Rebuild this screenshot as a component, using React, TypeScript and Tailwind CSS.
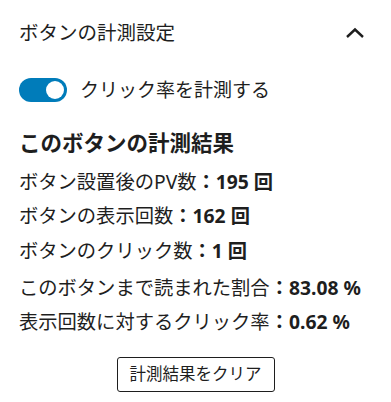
import React, { useState } from 'react';

const font = { fontFamily: '"Noto Sans", "Noto Sans CJK JP", sans-serif' };

function Toggle({ checked, onChange }: { checked: boolean; onChange: () => void }) {
  return (
    <button
      type="button"
      role="switch"
      aria-checked={checked}
      onClick={onChange}
      className={
        'relative h-[24px] w-[48px] shrink-0 rounded-full transition ' +
        (checked ? 'bg-[#007cba]' : 'bg-white border-2 border-[#1e1e1e]')
      }
    >
      <span
        className={
          'absolute top-[3px] h-[18px] w-[18px] rounded-full transition-all ' +
          (checked ? 'left-[27px] bg-white' : 'left-[3px] bg-[#1e1e1e]')
        }
      />
    </button>
  );
}

function Stat({ label, value, className }: { label: string; value: string; className?: string }) {
  return (
    <div className={'text-[19.3px] leading-[28px] ' + (className ?? '')}>
      {label}
      <span className="font-bold">：{value}</span>
    </div>
  );
}

export default function App() {
  const [enabled, setEnabled] = useState(true);

  return (
    <div className="w-[391px] h-[402px] bg-white text-[#1e1e1e] px-[19px]" style={font}>
      <div className="flex items-center justify-between pt-[19px]">
        <h2 className="text-[19.5px] leading-[28px] font-normal">ボタンの計測設定</h2>
        <svg width="20" height="12" viewBox="0 0 20 12" className="mr-[7px]" aria-hidden>
          <polyline points="2,10 10,2.5 18,10" fill="none" stroke="#1e1e1e" strokeWidth="2.4" />
        </svg>
      </div>

      <div className="mt-[31px] flex items-center gap-[13px]">
        <Toggle checked={enabled} onChange={() => setEnabled(!enabled)} />
        <span className="text-[19px] leading-[24px]">クリック率を計測する</span>
      </div>

      <h3 className="mt-[26px] text-[21.5px] leading-[30px] font-bold">このボタンの計測結果</h3>

      <div className="flex flex-col">
        <Stat className="mt-[10px]" label="ボタン設置後のPV数" value="195 回" />
        <Stat className="mt-[6px]" label="ボタンの表示回数" value="162 回" />
        <Stat className="mt-[7px]" label="ボタンのクリック数" value="1 回" />
        <Stat className="mt-[9px]" label="このボタンまで読まれた割合" value="83.08 %" />
        <Stat className="mt-[6px]" label="表示回数に対するクリック率" value="0.62 %" />
      </div>

      <div className="mt-[21px] flex justify-center">
        <button
          type="button"
          className="h-[35px] px-[12px] rounded-[3px] border-[1.5px] border-[#1e1e1e] bg-white text-[16.5px] leading-none"
        >
          計測結果をクリア
        </button>
      </div>
    </div>
  );
}
